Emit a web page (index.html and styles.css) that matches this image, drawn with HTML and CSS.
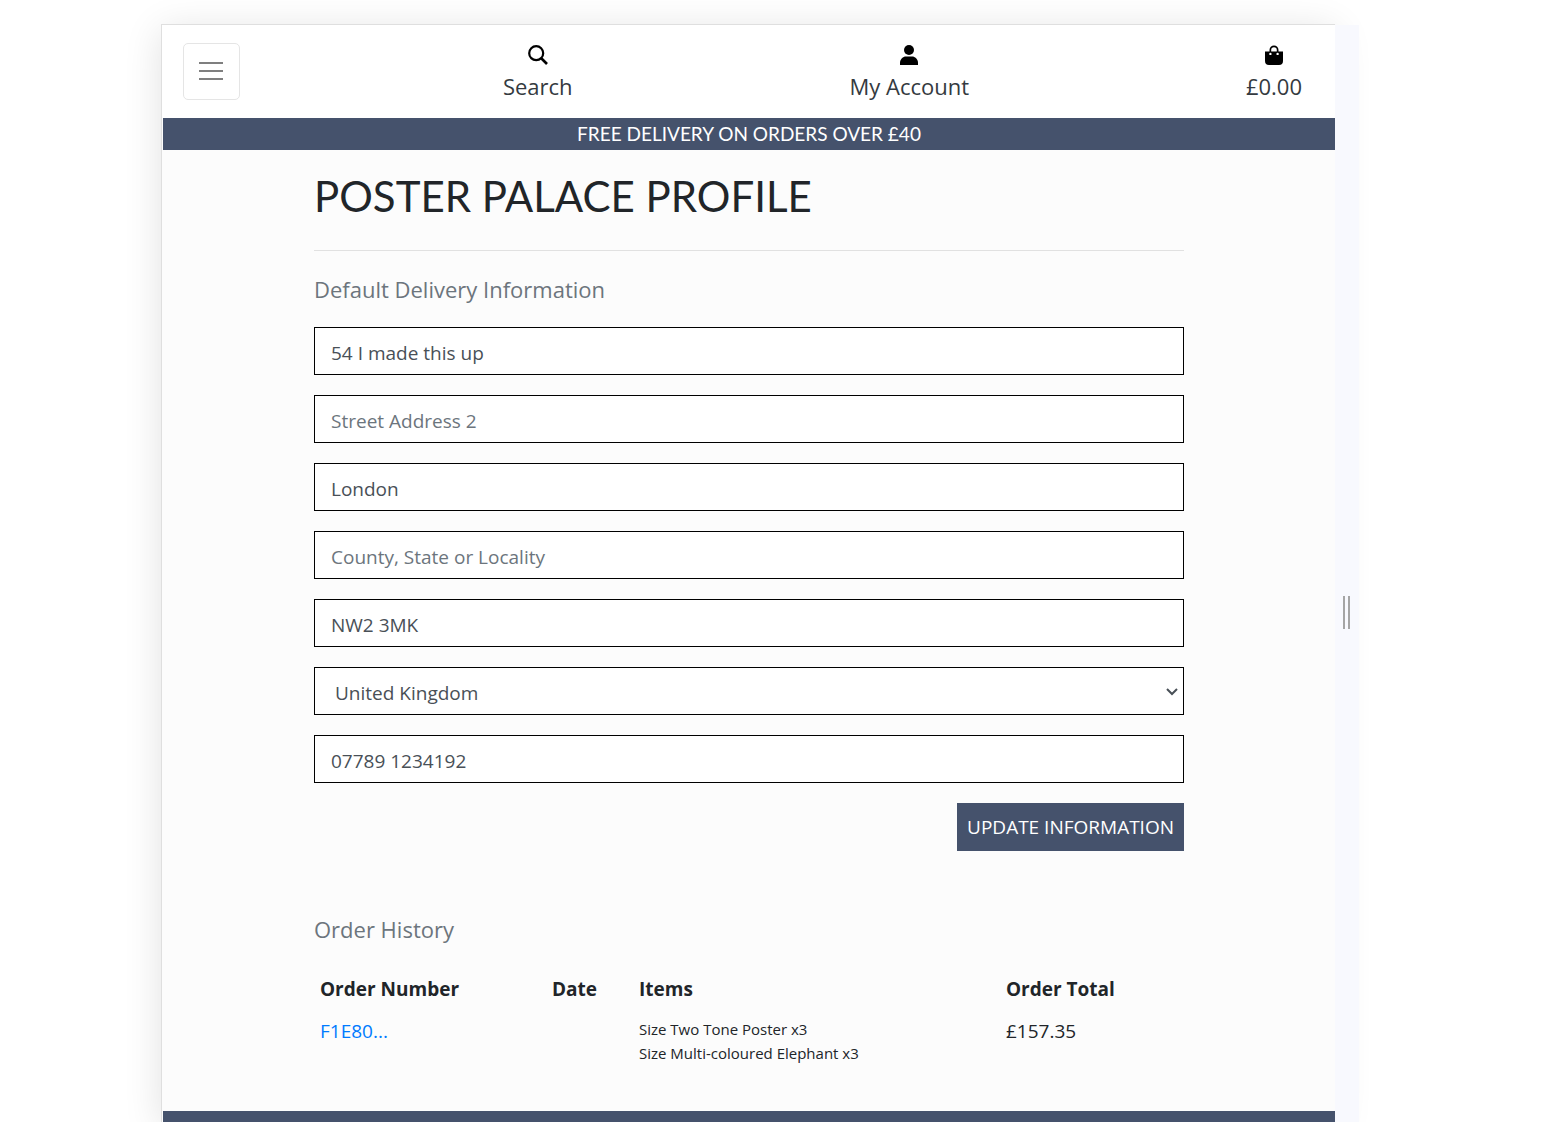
FILE: index.html
```html
<!DOCTYPE html>
<html lang="en">
<head>
<meta charset="utf-8">
<meta name="viewport" content="width=device-width, initial-scale=1">
<title>Poster Palace Profile</title>
<link rel="stylesheet" href="styles.css">
</head>
<body>
<div class="viewer">
  <div class="frame">
    <header class="topbar">
      <button class="menu-toggle" type="button" aria-label="Toggle navigation">
        <svg width="36" height="36" viewBox="0 0 36 36" aria-hidden="true"><path d="M5 9h24M5 17h24M5 25h24" stroke="#7f7f7f" stroke-width="2"/></svg>
      </button>
      <nav class="nav-links">
        <a class="nav-link" href="#">
          <svg class="icon" viewBox="0 0 20 20" aria-hidden="true"><path d="M13.500 13.500L19 19" fill="none" stroke="#000" stroke-width="2.600"/><circle cx="8.200" cy="8.200" r="7" fill="none" stroke="#000" stroke-width="2.200"/></svg>
          <span>Search</span>
        </a>
        <a class="nav-link" href="#">
          <svg class="icon" viewBox="0 0 20 20" aria-hidden="true"><circle cx="10" cy="5" r="5"/><path d="M1 20v-2c0-4 3-6.500 6-6.500h6c3 0 6 2.500 6 6.500v2z"/></svg>
          <span>My Account</span>
        </a>
        <a class="nav-link" href="#">
          <svg class="icon" viewBox="0 0 20 20" aria-hidden="true"><path fill-rule="evenodd" d="M1 6.500h4.500V5a4.500 4.500 0 0 1 9 0v1.500H19V16a4 4 0 0 1-4 4H5a4 4 0 0 1-4-4zM7.200 6.500h5.600V5a2.800 2.800 0 0 0-5.600 0zM6.400 10.100a1.200 1.200 0 1 0 0-2.400 1.200 1.200 0 1 0 0 2.400zM13.600 10.100a1.200 1.200 0 1 0 0-2.400 1.200 1.200 0 1 0 0 2.400z"/></svg>
          <span>£0.00</span>
        </a>
      </nav>
    </header>
    <p class="banner">FREE DELIVERY ON ORDERS OVER £40</p>
    <main class="container">
      <h1>POSTER PALACE PROFILE</h1>
      <hr>
      <h2>Default Delivery Information</h2>
      <form class="delivery-form">
        <input class="field" type="text" aria-label="Street Address 1" placeholder="Street Address 1" value="54 I made this up">
        <input class="field" type="text" aria-label="Street Address 2" placeholder="Street Address 2">
        <input class="field" type="text" aria-label="Town or City" placeholder="Town or City" value="London">
        <input class="field" type="text" aria-label="County, State or Locality" placeholder="County, State or Locality">
        <input class="field" type="text" aria-label="Postal Code" placeholder="Postal Code" value="NW2 3MK">
        <div class="select-wrap">
          <select class="field" aria-label="Country"><option>United Kingdom</option></select>
          <svg class="chevron" viewBox="0 0 12 8" aria-hidden="true"><path d="M1 1l5 5 5-5" fill="none" stroke="#495057" stroke-width="2"/></svg>
        </div>
        <input class="field" type="tel" aria-label="Phone Number" placeholder="Phone Number" value="07789 1234192">
        <button class="submit" type="submit">UPDATE INFORMATION</button>
      </form>
      <h2>Order History</h2>
      <table class="orders">
        <thead>
          <tr><th class="col-number">Order Number</th><th class="col-date">Date</th><th class="col-items">Items</th><th>Order Total</th></tr>
        </thead>
        <tbody>
          <tr>
            <td><a href="#">F1E80...</a></td>
            <td></td>
            <td><ul class="items"><li>Size Two Tone Poster x3</li><li>Size Multi-coloured Elephant x3</li></ul></td>
            <td>£157.35</td>
          </tr>
        </tbody>
      </table>
    </main>
    <footer class="footer"></footer>
  </div>
  <div class="resizer"><span class="grip"></span></div>
</div>
</body>
</html>
```
FILE: styles.css
```css
* { box-sizing: border-box; }

body {
  margin: 0;
  background: #fff;
  color: #212529;
  font-family: "Open Sans", "Noto Sans", sans-serif;
  font-size: 19px;
  line-height: 28px;
}

.viewer {
  display: flex;
  min-height: calc(100vh - 24px);
  margin: 24px 192px 0 161px;
}

.frame {
  flex: 1;
  display: flex;
  flex-direction: column;
  padding-left: 1px;
  border: solid #dfdfdf;
  border-width: 1px 0 0 1px;
  background: #fcfcfc;
  box-shadow: 0 6px 36px rgba(0, 0, 0, 0.12);
}

.topbar {
  display: flex;
  align-items: center;
  margin-left: -1px;
  padding: 15px 33px 15px 21px;
  background: #fff;
}

.menu-toggle {
  display: flex;
  align-items: center;
  justify-content: center;
  width: 57px;
  height: 57px;
  padding: 0;
  border: 1px solid #e5e5e5;
  border-radius: 5px;
  background: transparent;
}

.nav-links {
  flex: 1;
  display: flex;
  justify-content: space-between;
  margin-left: 23.5%;
}

.nav-link {
  display: flex;
  flex-direction: column;
  align-items: center;
  gap: 4px;
  color: #343a40;
  font-size: 22px;
  line-height: 34px;
  text-decoration: none;
}

.icon {
  width: 20px;
  height: 20px;
  margin-top: 5px;
  fill: #000;
}

.banner {
  margin: 0;
  background: #45526c;
  color: #fff;
  font-family: Lato, sans-serif;
  font-size: 19px;
  line-height: 32px;
  text-align: center;
}

.container {
  width: 100%;
  max-width: 870px;
  margin: 0 auto;
  padding-bottom: 40px;
}

h1 {
  margin: 20px 0 28px;
  font-family: Lato, sans-serif;
  font-size: 42px;
  font-weight: 400;
  line-height: 52px;
}

hr {
  margin: 0 0 22px;
  border: 0;
  border-top: 1px solid #e1e1e1;
}

h2 {
  margin: 0 0 22px;
  color: #6c757d;
  font-size: 22px;
  font-weight: 400;
  line-height: 32px;
}

.delivery-form {
  display: flex;
  flex-direction: column;
  gap: 20px;
  margin-bottom: 62px;
}

.field {
  width: 100%;
  height: 48px;
  padding: 4px 16px 0;
  border: 1px solid #000;
  border-radius: 0;
  background: #fff;
  color: #495057;
  font: inherit;
}

.field::placeholder { color: #6c757d; opacity: 1; }

.select-wrap { position: relative; display: flex; }

select.field { padding-left: 20px; appearance: none; }

.chevron {
  position: absolute;
  top: 21px;
  right: 6px;
  width: 12px;
  height: 8px;
  pointer-events: none;
}

.submit {
  align-self: flex-end;
  height: 48px;
  padding: 0 10px;
  border: 0;
  background: #45526c;
  color: #fff;
  font: inherit;
  font-weight: 500;
}

.orders {
  width: 100%;
  border-collapse: collapse;
  table-layout: fixed;
  text-align: left;
}

.orders th { padding: 8px 6px; font-weight: 700; }

.orders td { padding: 6px; vertical-align: top; }

.col-number { width: 232px; }
.col-date { width: 87px; }
.col-items { width: 367px; }

.orders a { color: #007bff; text-decoration: none; }

.items {
  margin: 0;
  padding: 0;
  list-style: none;
  font-size: 15px;
  line-height: 24px;
}

.footer {
  flex: 1;
  min-height: 11px;
  background: #45526c;
}

.resizer {
  z-index: 1;
  display: flex;
  align-items: center;
  justify-content: center;
  width: 24px;
  margin-top: 1px;
  padding: 78px 2px 0 0;
  background: #f8f9fe;
}

.grip {
  width: 7px;
  height: 33px;
  border: solid #a5a5a5;
  border-width: 0 2px;
}
```
